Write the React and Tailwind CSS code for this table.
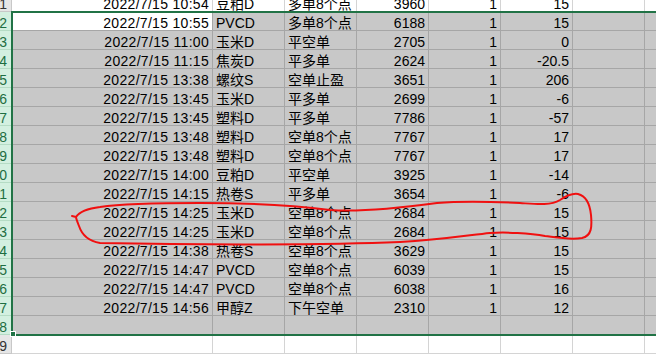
import React from "react";

const rows = [
  ["2022/7/15 10:54", "豆粕D", "多单8个点", "3960", "1", "15"],
  ["2022/7/15 10:55", "PVCD", "多单8个点", "6188", "1", "15"],
  ["2022/7/15 11:00", "玉米D", "平空单", "2705", "1", "0"],
  ["2022/7/15 11:15", "焦炭D", "平多单", "2624", "1", "-20.5"],
  ["2022/7/15 13:38", "螺纹S", "空单止盈", "3651", "1", "206"],
  ["2022/7/15 13:45", "玉米D", "平多单", "2699", "1", "-6"],
  ["2022/7/15 13:45", "塑料D", "平多单", "7786", "1", "-57"],
  ["2022/7/15 13:48", "塑料D", "空单8个点", "7767", "1", "17"],
  ["2022/7/15 13:48", "塑料D", "空单8个点", "7767", "1", "17"],
  ["2022/7/15 14:00", "豆粕D", "平空单", "3925", "1", "-14"],
  ["2022/7/15 14:15", "热卷S", "平多单", "3654", "1", "-6"],
  ["2022/7/15 14:25", "玉米D", "空单8个点", "2684", "1", "15"],
  ["2022/7/15 14:25", "玉米D", "空单8个点", "2684", "1", "15"],
  ["2022/7/15 14:38", "热卷S", "空单8个点", "3629", "1", "15"],
  ["2022/7/15 14:47", "PVCD", "空单8个点", "6039", "1", "15"],
  ["2022/7/15 14:47", "PVCD", "空单8个点", "6038", "1", "16"],
  ["2022/7/15 14:56", "甲醇Z", "下午空单", "2310", "1", "12"],
  ["", "", "", "", "", ""],
  ["", "", "", "", "", ""],
];

function Row({ data, idx }) {
  const selected = idx >= 1 && idx <= 17;
  const active = idx === 1;
  const grid = selected ? "border-[#a6a6a6]" : "border-[#d4d4d4]";
  const bg = selected ? "bg-[#c8c8c8]" : "bg-white";
  const cellA = active ? "bg-white" : bg;
  const num = 41 + idx;
  return (
    <div className="flex h-[19px] shrink-0">
      <div
        className={
          "w-[12px] shrink-0 overflow-hidden border-b border-r flex justify-end pr-[4px] leading-[18px] pt-[2px] text-[14px] " +
          (selected
            ? "bg-[#d3f0e0] border-[#b5dcc5] text-[#1e6e42]"
            : "bg-[#e6e6e6] border-[#c8c8c8] text-[#333]")
        }
      >
        <span className="whitespace-nowrap">{num}</span>
      </div>
      <div
        className={`w-[201px] shrink-0 border-b border-r ${grid} ${cellA} text-right pr-[3px] leading-[18px] pt-[2px] tracking-[0.3px] whitespace-nowrap`}
      >
        {data[0]}
      </div>
      <div className={`w-[72px] shrink-0 border-b border-r ${grid} ${bg} pl-[3px] leading-[18px] pt-[2px] whitespace-nowrap overflow-visible`}>
        {data[1]}
      </div>
      <div className={`w-[72px] shrink-0 border-b border-r ${grid} ${bg} pl-[3px] leading-[18px] pt-[2px] whitespace-nowrap`}>
        {data[2]}
      </div>
      <div className={`w-[72px] shrink-0 border-b border-r ${grid} ${bg} text-right pr-[3px] leading-[18px] pt-[2px]`}>
        {data[3]}
      </div>
      <div className={`w-[72px] shrink-0 border-b border-r ${grid} ${bg} text-right pr-[3px] leading-[18px] pt-[2px]`}>
        {data[4]}
      </div>
      <div className={`w-[72px] shrink-0 border-b border-r ${grid} ${bg} text-right pr-[3px] leading-[18px] pt-[2px]`}>
        {data[5]}
      </div>
      <div className={`w-[72px] shrink-0 border-b border-r ${grid} ${bg}`}></div>
      <div className={`flex-1 border-b ${grid} ${bg}`}></div>
    </div>
  );
}

export default function App() {
  return (
    <div
      className="relative w-[656px] h-[356px] overflow-hidden bg-white text-[14px] text-black"
      style={{ fontFamily: '"Liberation Sans", "Noto Sans CJK SC", sans-serif' }}
    >
      <div className="flex flex-col mt-[-7px]">
        {rows.map((r, i) => (
          <Row key={i} data={r} idx={i} />
        ))}
      </div>
      {/* selection border */}
      <div className="absolute left-[11px] top-[11px] right-0 h-[325px] border-2 border-r-0 border-[#217346] pointer-events-none"></div>
      {/* fill handle */}
      <div className="absolute left-[10px] top-[331px] w-[6px] h-[6px] bg-[#217346] border border-white"></div>
      {/* red hand-drawn ellipse */}
      <svg className="absolute inset-0 pointer-events-none" width="656" height="356" viewBox="0 0 656 356">
        <path
          d="M72,216 L76,217 C78,214 84,209 100,207 C120,204 160,203 200,203 C240,203 290,205 330,210 C360,212 400,208 437,203 C460,201 500,202 520,203 C535,204 550,206 560,200 C566,196 572,193 578,194 C586,196 590,205 591,215 C592,226 592,236 582,238 C570,240 560,238 545,236 C530,233 505,232 490,233 C470,235 440,240 400,242 C330,245 200,245 100,243 C88,241 82,235 79,226 C77,221 76,218 76,217"
          fill="none"
          stroke="#f01010"
          strokeWidth="2"
          strokeLinecap="round"
          strokeLinejoin="round"
        />
      </svg>
    </div>
  );
}
